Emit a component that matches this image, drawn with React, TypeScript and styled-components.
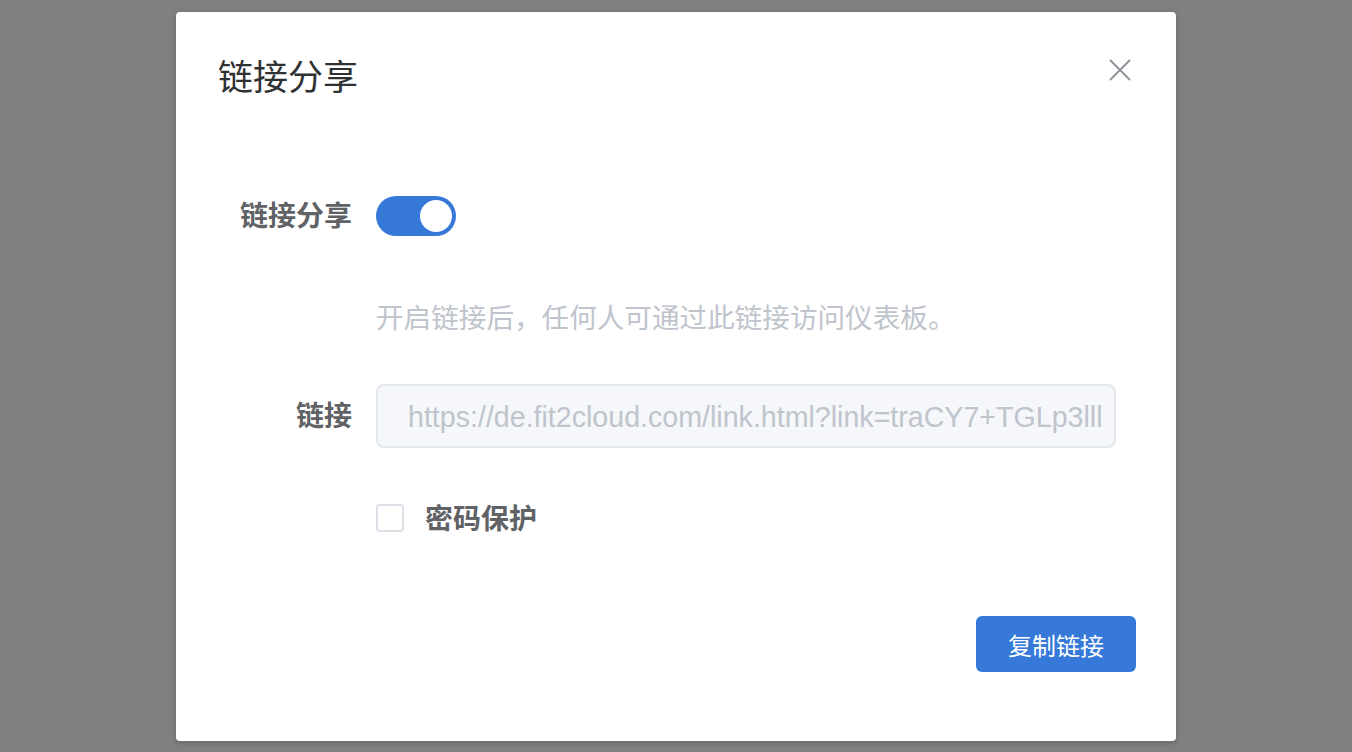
import styled, { createGlobalStyle } from "styled-components";

const GlobalStyle = createGlobalStyle`
  html, body {
    margin: 0;
    padding: 0;
    background: #808080;
  }
  body {
    font-family: "Liberation Sans", "Noto Sans CJK SC", sans-serif;
  }
`;

const SHARE_LINK = "https://de.fit2cloud.com/link.html?link=traCY7+TGLp3lll";

const App = () => {
  return (
    <Page>
      <GlobalStyle />
      <Dialog>
        <Header>
          <Title>链接分享</Title>
          <CloseButton aria-label="close">
            <svg width="22" height="22" viewBox="0 0 22 22">
              <path
                d="M1 1 L21 21 M21 1 L1 21"
                stroke="#909399"
                strokeWidth="2"
                fill="none"
              />
            </svg>
          </CloseButton>
        </Header>
        <Body>
          <FormRow $gap={62}>
            <Label>链接分享</Label>
            <Switch>
              <Knob />
            </Switch>
          </FormRow>
          <FormRow $gap={46}>
            <Label />
            <Hint>开启链接后，任何人可通过此链接访问仪表板。</Hint>
          </FormRow>
          <FormRow $gap={50} $tall>
            <Label>链接</Label>
            <LinkInput readOnly value={SHARE_LINK} />
          </FormRow>
          <FormRow $gap={0}>
            <Label />
            <CheckLabel>
              <CheckBox />
              <CheckText>密码保护</CheckText>
            </CheckLabel>
          </FormRow>
        </Body>
        <Footer>
          <PrimaryButton>复制链接</PrimaryButton>
        </Footer>
      </Dialog>
    </Page>
  );
};

const Page = styled.div`
  width: 100%;
  height: 752px;
  display: flex;
  justify-content: center;
  align-items: flex-start;
  padding-top: 12px;
  box-sizing: border-box;
  overflow: hidden;
`;

const Dialog = styled.div`
  width: 1000px;
  background: #ffffff;
  border-radius: 4px;
  box-shadow: 0 2px 6px rgba(0, 0, 0, 0.2);
  display: flex;
  flex-direction: column;
`;

const Header = styled.div`
  display: flex;
  justify-content: space-between;
  align-items: flex-start;
  padding: 40px 45px 0 42px;
`;

const Title = styled.div`
  font-family: "Noto Sans CJK SC", sans-serif;
  font-size: 35px;
  line-height: 46px;
  color: #303133;
`;

const CloseButton = styled.button`
  border: none;
  background: none;
  padding: 0;
  margin-top: 7px;
  width: 22px;
  height: 22px;
  cursor: pointer;
  display: flex;
`;

const Body = styled.div`
  display: flex;
  flex-direction: column;
  padding: 98px 60px 0 40px;
`;

const FormRow = styled.div<{ $gap: number; $tall?: boolean }>`
  display: flex;
  align-items: center;
  height: ${({ $tall }) => ($tall ? 64 : 40)}px;
  margin-bottom: ${({ $gap }) => $gap}px;
`;

const Label = styled.div`
  width: 160px;
  flex-shrink: 0;
  box-sizing: border-box;
  padding-right: 24px;
  text-align: right;
  font-family: "Noto Sans CJK SC", sans-serif;
  font-size: 28px;
  font-weight: 700;
  color: #606266;
  line-height: 34px;
  margin-bottom: 4px;
`;

const Switch = styled.div`
  width: 80px;
  height: 40px;
  border-radius: 20px;
  background: #3679d9;
  display: flex;
  align-items: center;
  justify-content: flex-end;
  padding: 0 4px;
  box-sizing: border-box;
`;

const Knob = styled.span`
  width: 32px;
  height: 32px;
  border-radius: 50%;
  background: #ffffff;
`;

const Hint = styled.div`
  font-family: "Noto Sans CJK SC", sans-serif;
  font-size: 27.6px;
  line-height: 34px;
  margin-bottom: 4px;
  color: #c0c4cc;
`;

const LinkInput = styled.input`
  flex: 1;
  min-width: 0;
  height: 64px;
  box-sizing: border-box;
  border: 2px solid #e4e7ed;
  border-radius: 8px;
  background: #f5f7fa;
  padding: 2px 4px 0 30px;
  font-family: "Liberation Sans", Arial, sans-serif;
  font-size: 28.6px;
  color: #c0c4cc;
  outline: none;
`;

const CheckLabel = styled.label`
  display: flex;
  align-items: center;
  gap: 21px;
  height: 40px;
  cursor: pointer;
`;

const CheckBox = styled.span`
  width: 28px;
  height: 28px;
  box-sizing: border-box;
  border: 2px solid #dcdfe6;
  border-radius: 4px;
  background: #ffffff;
`;

const CheckText = styled.span`
  font-family: "Noto Sans CJK SC", sans-serif;
  font-size: 28px;
  font-weight: 700;
  color: #606266;
  line-height: 34px;
  margin-bottom: 2px;
`;

const Footer = styled.div`
  display: flex;
  justify-content: flex-end;
  padding: 78px 40px 69px;
`;

const PrimaryButton = styled.button`
  width: 160px;
  height: 56px;
  border: none;
  border-radius: 6px;
  background: #3679d9;
  color: #ffffff;
  font-family: "Noto Sans CJK SC", sans-serif;
  font-size: 24px;
  cursor: pointer;
`;

export default App;
